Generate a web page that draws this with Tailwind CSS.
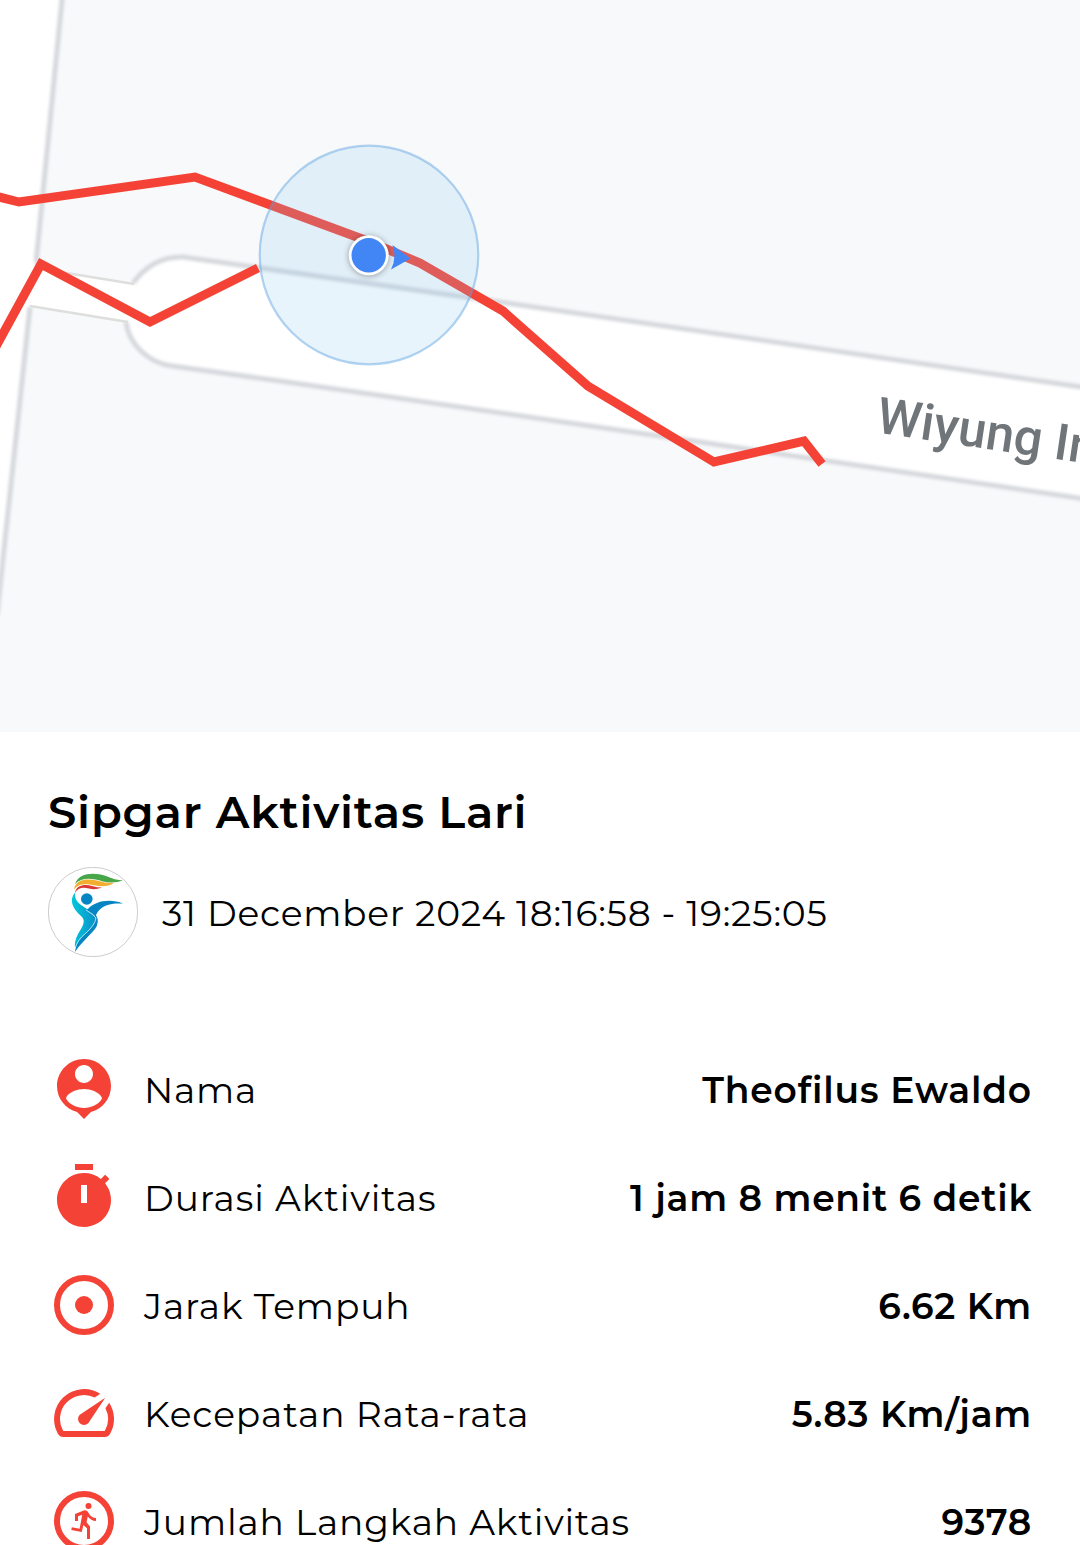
<!DOCTYPE html>
<html lang="id">
<head>
    <meta charset="UTF-8">
    <meta name="viewport" content="width=device-width, initial-scale=1.0">
    <title>Sipgar Aktivitas Lari</title>
    <script src="https://cdn.jsdelivr.net/npm/@tailwindcss/browser@4"></script>
</head>
<body class="bg-white text-black font-['Montserrat','Inter',sans-serif] h-[1545px] overflow-hidden">
    <!-- Peta -->
    <div class="w-full h-[732px] bg-white overflow-hidden">
        <svg class="block w-[1080px] h-[732px]" viewBox="0 0 1080 732">
            <defs>
                <filter id="soft" x="-5%" y="-5%" width="110%" height="110%"><feGaussianBlur stdDeviation="1.5"/></filter>
                <filter id="shadow" x="-50%" y="-50%" width="200%" height="200%"><feGaussianBlur stdDeviation="3"/></filter>
            </defs>
            <path fill="#f8f9fb" d="M62 0L36 258Q37 268 46 270L133 284Q153 256 183 257L500 302L1080 387V0Z"/>
            <path fill="#f8f9fb" d="M0 607L30 307L126 322C129 345 149 363 172 366L280 381L680 439L1080 499V732H0Z"/>
            <g fill="none" stroke="#d6d8dd" stroke-width="5" filter="url(#soft)">
                <path d="M62.500 -5L36.500 258Q37 268 42 270"/>
                <path d="M133 283Q153 256 183 257L500 302L1085 387.500"/>
                <path d="M-3 615L30 307"/>
                <path d="M126 322C129 345 149 363 172 366L280 381L680 439L1085 499"/>
            </g>
            <path fill="none" stroke="#dededd" stroke-width="2.500" d="M42 269L134 284M30 306L128 322"/>
            <g fill="none" stroke="#f44336" stroke-width="9">
                <path d="M-5 196L19 202L195 177L365 240L420 263L503 311L588 386L714 462L804 441L822 464"/>
                <path d="M-7 352L41 264L150 322L258 268"/>
            </g>
            <circle cx="369" cy="255" r="109.300" fill="#88c6f1" fill-opacity=".2" stroke="#5b9fdf" stroke-opacity=".45" stroke-width="2.200"/>
            <circle cx="368.700" cy="256" r="20" fill="#000" fill-opacity=".35" filter="url(#shadow)"/>
            <circle cx="368.700" cy="255.300" r="20" fill="#fff"/>
            <circle cx="368.700" cy="255.300" r="17.200" fill="#4285f4"/>
            <path fill="#4285f4" d="M392.500 245L410.500 258.500L391 269.500Q397 257 392.500 245Z"/>
            <text transform="translate(875 432.300) rotate(8.400)" font-family="Roboto" font-weight="500" font-size="50.500" fill="#70757a">Wiyung In</text>
        </svg>
    </div>

    <!-- Judul dan waktu -->
    <div class="px-12 pt-[50px]">
        <h1 class="text-[45px] leading-[60px] font-semibold tracking-[0.8px] whitespace-nowrap">Sipgar Aktivitas Lari</h1>
        <div class="flex items-center gap-6 mt-[25px]">
            <svg class="w-[90px] h-[90px] shrink-0" viewBox="0 0 90 90">
                <defs>
                    <linearGradient id="body" x1="0" x2="1"><stop offset="0" stop-color="#00c8dc"/><stop offset="1" stop-color="#0a8fc8"/></linearGradient>
                </defs>
                <circle cx="45" cy="45" r="44.700" fill="#fff" stroke="#999" stroke-width=".5"/>
                <path fill="#46a648" d="M27 17C31 6 45 5 58 9Q67 13 75 13.500Q65 17 55 14.500C44 11 34 10 27 17Z"/>
                <path fill="#f2ae2e" d="M26 22.500C28 12 38 11.500 49 13.500Q58 16.500 66 16Q58 21 47 18.500C36 16 30 17 26 22.500Z"/>
                <path fill="#dc3732" d="M27 26C28 18 37 17 44 19Q49 20.500 54 20.500Q47 23.500 41 21.500C34 20 30 21 27 26Z"/>
                <circle cx="38.800" cy="32" r="5.800" fill="#0585c3"/>
                <path fill="url(#body)" d="M27 25.500C21 33 24 41 33 49C39 54 34 60 30 67Q26 75 27 81Q34 72 43 63C51 56 49 49 41 43C32 38 26 34 27 25.500Z"/>
                <path fill="#0785c3" d="M39 43C46 34 62 31 75 36.500C64 36 53 37 48 48Q52 55 47 62C40 70 33 76 27 85Q27 77 35 69C44 61 47 56 47.500 51Q46 46 39 43Z"/>
                <path fill="none" stroke="#fff" stroke-width=".7" d="M38 43Q45 47 48 51Q47 58 38 66Q29 73 27 82"/>
            </svg>
            <p class="pt-px text-[36px] leading-[44px] font-normal tracking-[0.75px] whitespace-nowrap">31 December 2024 18:16:58 - 19:25:05</p>
        </div>
    </div>

    <!-- Detail aktivitas -->
    <div class="px-12 pt-[78px] text-[36px] leading-[44px] tracking-[0.75px] whitespace-nowrap">
        <div class="flex items-center h-[108px]">
            <svg class="w-[72px] h-[72px] fill-[#f44336]" viewBox="0 0 24 24"><path fill-rule="evenodd" d="M12 2c-4.970 0-9 4.030-9 9 0 4.170 2.840 7.670 6.690 8.690L12 22l2.310-2.310C18.160 18.670 21 15.170 21 11c0-4.970-4.030-9-9-9zm0 2c1.660 0 3 1.340 3 3s-1.340 3-3 3-3-1.340-3-3 1.340-3 3-3zm0 14.300c-2.500 0-4.710-1.030-5.850-2.850a.75.75 0 0 1 0-.8C7.300 12.900 9.600 12 12 12s4.700.9 5.850 2.650a.75.75 0 0 1 0 .8C16.710 17.270 14.500 18.300 12 18.300z"/></svg>
            <span class="ml-6 pt-px">Nama</span>
            <span class="ml-auto pt-px font-semibold tracking-[0.9px]">Theofilus Ewaldo</span>
        </div>
        <div class="flex items-center h-[108px]">
            <svg class="w-[72px] h-[72px] fill-[#f44336]" viewBox="0 0 24 24"><path fill-rule="evenodd" d="M15 1H9v2h6V1zm-4 13h2V8h-2v6zm8.030-6.610l1.420-1.420c-.43-.51-.9-.99-1.410-1.410l-1.420 1.420A8.962 8.962 0 0 0 12 4c-4.970 0-9 4.030-9 9s4.020 9 9 9a8.994 8.994 0 0 0 7.030-14.610z"/></svg>
            <span class="ml-6 pt-px tracking-[0.9px]">Durasi Aktivitas</span>
            <span class="ml-auto pt-px font-semibold">1 jam 8 menit 6 detik</span>
        </div>
        <div class="flex items-center h-[108px]">
            <svg class="w-[72px] h-[72px]" viewBox="0 0 24 24"><circle cx="12" cy="12" r="9" fill="none" stroke="#f44336" stroke-width="2"/><circle cx="12" cy="12" r="3" fill="#f44336"/></svg>
            <span class="ml-6 pt-px tracking-[0.87px]">Jarak Tempuh</span>
            <span class="ml-auto pt-px font-semibold">6.62 Km</span>
        </div>
        <div class="flex items-center h-[108px]">
            <svg class="w-[72px] h-[72px] fill-[#f44336]" viewBox="0 0 24 24"><path d="M20.380 8.570l-1.230 1.850a8 8 0 0 1-.22 7.580H5.070A8 8 0 0 1 15.580 6.850l1.850-1.230A10 10 0 0 0 3.350 19a2 2 0 0 0 1.720 1h13.850a2 2 0 0 0 1.740-1 10 10 0 0 0-.27-10.440zm-9.790 6.840a2 2 0 0 0 2.830 0l5.660-8.490-8.490 5.660a2 2 0 0 0 0 2.830z"/></svg>
            <span class="ml-6 pt-px tracking-[0.92px]">Kecepatan Rata-rata</span>
            <span class="ml-auto pt-px font-semibold">5.83 Km/jam</span>
        </div>
        <div class="flex items-center h-[108px]">
            <svg class="w-[72px] h-[72px]" viewBox="0 0 24 24"><circle cx="12" cy="12" r="9" fill="none" stroke="#f44336" stroke-width="2"/><circle cx="13.500" cy="7" r="1" fill="#f44336"/><path fill="#f44336" d="M16 12v-1c-.95 0-1.750-.5-2.200-1.220l-.48-.78c-.25-.4-.7-.7-1.220-.58L9 9.650V12h1v-1.600l1.400-.5-.85 4.700-2.600-.5-.2.900 3.500.7.550-2.400L13 14.400V18h1v-4.200l-1.150-1.400.4-1.900C13.900 11.400 14.900 12 16 12z"/></svg>
            <span class="ml-6 pt-px tracking-[0.83px]">Jumlah Langkah Aktivitas</span>
            <span class="ml-auto pt-px font-semibold">9378</span>
        </div>
    </div>
</body>
</html>
